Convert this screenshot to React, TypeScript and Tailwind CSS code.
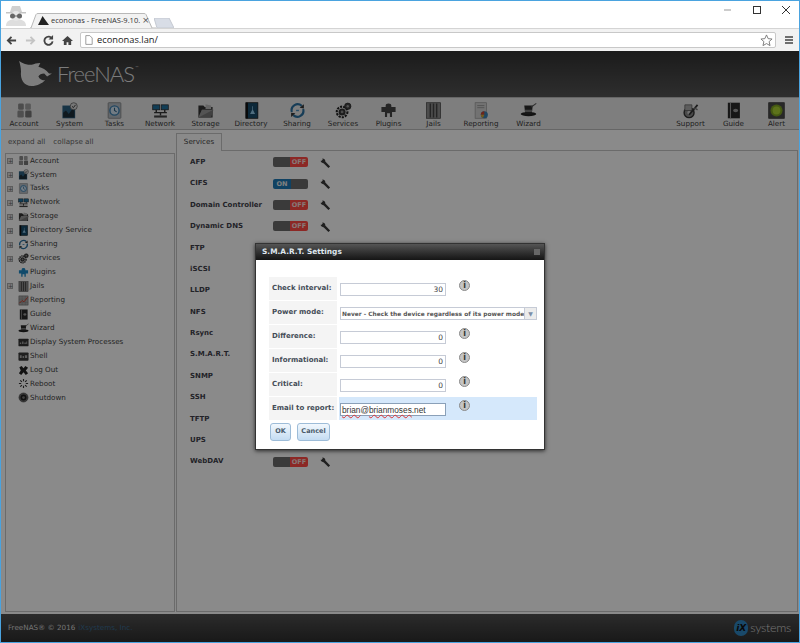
import { ReactNode } from "react";

const icons: Record<string, ReactNode> = {
  account: (
    <>
      <rect x="3" y="2" width="8" height="9" rx="2" fill="#8a8a8a" />
      <rect x="13" y="2" width="8" height="9" rx="2" fill="#a0a0a0" />
      <rect x="2" y="12" width="9" height="10" rx="2" fill="#909090" />
      <rect x="13" y="12" width="9" height="10" rx="2" fill="#777" />
    </>
  ),
  system: (
    <>
      <rect x="2" y="5" width="18" height="18" fill="#2b5f80" />
      <path d="M3 22v-7l4-3 4 5 5-7 3 2v10z" fill="#1c2e3a" />
      <circle cx="18" cy="6" r="5" fill="#d9d9d9" stroke="#555" />
      <path d="M15.5 6l2 2 3-4" stroke="#333" strokeWidth="1.3" fill="none" />
    </>
  ),
  tasks: (
    <>
      <rect x="3" y="1" width="18" height="22" rx="1" fill="#b4bcc4" stroke="#777" />
      <circle cx="12" cy="12" r="6.5" fill="#cfe0ee" stroke="#3a7fb0" strokeWidth="2" />
      <path d="M12 8v4l3 2" stroke="#2a5c80" strokeWidth="1.5" fill="none" />
    </>
  ),
  network: (
    <>
      <rect x="1" y="4" width="10" height="7" fill="#1f6f9c" stroke="#222" />
      <rect x="13" y="4" width="10" height="7" fill="#1f6f9c" stroke="#222" />
      <path d="M6 11v3M18 11v3M3 15h18M12 15v4" stroke="#333" strokeWidth="2" />
      <rect x="3" y="19" width="18" height="3" fill="#444" />
    </>
  ),
  storage: (
    <>
      <path d="M2 5h7l2 2h11v15H2z" fill="#333" />
      <path d="M12 3l8 2v5h-8z" fill="#bbb" />
      <path d="M2 22l5-11h16l-3 11z" fill="#777" />
      <path d="M2 22l5-11h16z" fill="#999" />
    </>
  ),
  directory: (
    <>
      <rect x="4" y="1" width="17" height="22" fill="#174a68" stroke="#111" />
      <rect x="4" y="1" width="3" height="22" fill="#111" />
      <path d="M13 6v5l-3 6h7l-3-6V6z" fill="#8fc6e8" />
    </>
  ),
  sharing: (
    <>
      <path d="M4 14A8.5 8.5 0 0 1 18 5.500" stroke="#2a6f9e" strokeWidth="3" fill="none" />
      <path d="M20 10A8.500 8.500 0 0 1 6 18.500" stroke="#2a6f9e" strokeWidth="3" fill="none" />
      <path d="M15 8l6-5v6zM9 16l-6 5v-6z" fill="#333" />
      <path d="M10 12h4" stroke="#4a90c0" strokeWidth="2" />
    </>
  ),
  services: (
    <>
      <circle cx="10" cy="14" r="7.500" fill="none" stroke="#222" strokeWidth="3" strokeDasharray="3 1.500" />
      <circle cx="10" cy="14" r="5" fill="#333" />
      <circle cx="10" cy="14" r="2" fill="#888" />
      <circle cx="18" cy="6" r="4.500" fill="#444" stroke="#222" />
      <circle cx="18" cy="6" r="1.700" fill="#999" />
    </>
  ),
  plugins: <path d="M8 5a4 3 0 0 1 8 0v2h6v7h-5v7h-3v-5h-4v5H7v-7H2V7h6z" fill="#444" />,
  pluginsBlue: <path d="M8 5a4 3 0 0 1 8 0v2h6v7h-5v7h-3v-5h-4v5H7v-7H2V7h6z" fill="#1e88c4" />,
  jails: (
    <>
      <rect x="2" y="1" width="20" height="22" fill="#8a8a8a" stroke="#444" />
      <path d="M7.500 2v20M12 2v20M16.500 2v20" stroke="#444" strokeWidth="2" />
    </>
  ),
  reporting: (
    <>
      <rect x="3" y="1" width="16" height="22" fill="#cfcfcf" stroke="#999" />
      <path d="M6 5h10M6 8h10" stroke="#888" />
      <circle cx="16" cy="18" r="5" fill="#3b82b5" />
      <path d="M16 18v-5a5 5 0 0 0-5 5z" fill="#c8442f" />
      <path d="M16 18h-5a5 5 0 0 0 3 4.600z" fill="#d8a52f" />
    </>
  ),
  reportingSmall: (
    <>
      <rect x="2" y="2" width="20" height="20" fill="#a8a8a8" stroke="#555" />
      <path d="M2 9h20M2 16h20M9 2v20M16 2v20" stroke="#777" strokeWidth="0.7" />
      <path d="M3 18l6-6 4 3 8-10" stroke="#c93a2a" strokeWidth="2" fill="none" />
    </>
  ),
  wizard: (
    <>
      <ellipse cx="12" cy="17" rx="11" ry="3" fill="#222" />
      <path d="M6 5h12l-1.500 12h-9z" fill="#2b2b2b" />
      <path d="M6.700 11h10.600l-.4 3H7.100z" fill="#777" />
      <path d="M16 7l7-5" stroke="#555" strokeWidth="1.500" />
    </>
  ),
  support: (
    <>
      <circle cx="10" cy="15" r="7" fill="#888" stroke="#333" strokeWidth="2" />
      <circle cx="10" cy="15" r="2.500" fill="#ccc" />
      <path d="M4 4h10v8H4z" fill="#aaa" stroke="#555" />
      <path d="M10 18L22 4" stroke="#333" strokeWidth="2.500" />
      <path d="M17 8l5 3" stroke="#777" strokeWidth="2" />
    </>
  ),
  guide: (
    <>
      <rect x="4" y="1" width="17" height="22" fill="#2a2a2a" />
      <rect x="7" y="1" width="1.500" height="22" fill="#999" />
      <ellipse cx="15" cy="12" rx="3.500" ry="2.500" fill="#9a9a9a" />
    </>
  ),
  alert: (
    <>
      <rect x="1" y="1" width="22" height="22" fill="#4a4a4a" stroke="#2f2f2f" />
      <circle cx="12" cy="12" r="8.500" fill="#7ea321" />
      <circle cx="12" cy="12" r="5.500" fill="#a9d132" />
    </>
  ),
  display: (
    <>
      <rect x="1" y="4" width="22" height="16" rx="1" fill="#333" />
      <path d="M4 12h3v3H4zM9 10h3v5H9zM14 12h3v3h-3zM18 10h2v5h-2z" fill="#a5a5a5" />
    </>
  ),
  shell: (
    <>
      <rect x="1" y="3" width="22" height="18" rx="2" fill="#3a3a3a" />
      <path d="M4 9h4v6H4zM10 11h3v4h-3zM15 9h5v6h-5z" fill="#aaa" />
    </>
  ),
  logout: <path d="M3 5l5-3 4 5 4-5 6 4-5 6 5 6-5 4-5-6-5 6-5-4 4-6z" fill="#222" />,
  reboot: (
    <path
      d="M12 2v5M12 17v5M2 12h5M17 12h5M5 5l3.500 3.500M15.500 15.500L19 19M19 5l-3.500 3.500M8.500 15.500L5 19"
      stroke="#333"
      strokeWidth="2.500"
    />
  ),
  shutdown: (
    <>
      <circle cx="12" cy="12" r="10" fill="#666" stroke="#333" />
      <circle cx="12" cy="12" r="6.500" fill="#1f1f1f" />
      <circle cx="12" cy="12" r="3" fill="#777" />
    </>
  ),
};

function Icon({ name, className }: { name: string; className: string }) {
  return (
    <svg viewBox="0 0 24 24" className={className}>
      {icons[name]}
    </svg>
  );
}

const navLeft = [
  { label: "Account", icon: "account", w: "w-[46px]" },
  { label: "System", icon: "system", w: "w-[45px]" },
  { label: "Tasks", icon: "tasks", w: "w-[45px]" },
  { label: "Network", icon: "network", w: "w-[46px]" },
  { label: "Storage", icon: "storage", w: "w-[45px]" },
  { label: "Directory", icon: "directory", w: "w-[46px]" },
  { label: "Sharing", icon: "sharing", w: "w-[46px]" },
  { label: "Services", icon: "services", w: "w-[46px]" },
  { label: "Plugins", icon: "plugins", w: "w-[45px]" },
  { label: "Jails", icon: "jails", w: "w-[45px]" },
  { label: "Reporting", icon: "reporting", w: "w-[50px]" },
  { label: "Wizard", icon: "wizard", w: "w-[45px]" },
];

const navRight = [
  { label: "Support", icon: "support", w: "w-[43px]" },
  { label: "Guide", icon: "guide", w: "w-[43px]" },
  { label: "Alert", icon: "alert", w: "w-[43px]" },
];

const tree = [
  { label: "Account", icon: "account", plus: true },
  { label: "System", icon: "system", plus: true },
  { label: "Tasks", icon: "tasks", plus: true },
  { label: "Network", icon: "network", plus: true },
  { label: "Storage", icon: "storage", plus: true },
  { label: "Directory Service", icon: "directory", plus: true },
  { label: "Sharing", icon: "sharing", plus: true },
  { label: "Services", icon: "services", plus: true },
  { label: "Plugins", icon: "pluginsBlue", plus: false },
  { label: "Jails", icon: "jails", plus: true },
  { label: "Reporting", icon: "reportingSmall", plus: false },
  { label: "Guide", icon: "guide", plus: false },
  { label: "Wizard", icon: "wizard", plus: false },
  { label: "Display System Processes", icon: "display", plus: false },
  { label: "Shell", icon: "shell", plus: false },
  { label: "Log Out", icon: "logout", plus: false },
  { label: "Reboot", icon: "reboot", plus: false },
  { label: "Shutdown", icon: "shutdown", plus: false },
];

const services = [
  { name: "AFP", on: false },
  { name: "CIFS", on: true },
  { name: "Domain Controller", on: false },
  { name: "Dynamic DNS", on: false },
  { name: "FTP", on: false },
  { name: "iSCSI", on: false },
  { name: "LLDP", on: false },
  { name: "NFS", on: false },
  { name: "Rsync", on: false },
  { name: "S.M.A.R.T.", on: false },
  { name: "SNMP", on: false },
  { name: "SSH", on: false },
  { name: "TFTP", on: false },
  { name: "UPS", on: false },
  { name: "WebDAV", on: false },
];

function Wrench() {
  return (
    <svg viewBox="0 0 12 12" className="w-[11px] h-[11px]">
      <path
        d="M1 3.500L3 1.500 2.500 .5A3 3 0 0 1 5.800 3.800L11 9.200 9.200 11 3.900 5.600A3 3 0 0 1 .6 2.300z"
        fill="#3a3a3a"
      />
    </svg>
  );
}

function Toggle({ on }: { on: boolean }) {
  return (
    <div className="flex w-[35px] h-[10px] rounded-[2px] overflow-hidden text-[6.500px] font-bold leading-[10px] text-center">
      {on ? (
        <>
          <span className="w-[18px] bg-[#1e78b4] text-[#e8e8e8]">ON</span>
          <span className="flex-1 bg-[#6a6a6a]" />
        </>
      ) : (
        <>
          <span className="flex-1 bg-[#6a6a6a]" />
          <span className="w-[18px] bg-[#ff4a44] text-[#f4dcdc]">OFF</span>
        </>
      )}
    </div>
  );
}

function InfoDot() {
  return (
    <div className="w-[11px] h-[11px] rounded-full bg-[#c4c4c4] border border-[#8a8a8a] flex items-center justify-center text-[8px] font-bold leading-none text-[#333]">
      i
    </div>
  );
}

function FormRow({
  label,
  children,
  active,
  info = true,
}: {
  label: string;
  children: ReactNode;
  active?: boolean;
  info?: boolean;
}) {
  return (
    <div className="flex h-[23px] gap-[2px]">
      <div className="w-[68px] bg-[#f4f4f4] pl-[3px] flex items-center text-[7px] font-bold text-[#444d58] whitespace-nowrap">
        {label}
      </div>
      <div className={`flex-1 flex pl-[1px] ${active ? "bg-[#d5e8fb]" : ""}`}>
        <div className="pt-[6px]">{children}</div>
        {info && (
          <div className="ml-[13px] pt-[3px]">
            <InfoDot />
          </div>
        )}
      </div>
    </div>
  );
}

function NumInput({ value }: { value: string }) {
  return (
    <div className="w-[106px] h-[13px] bg-white border border-[#c6cbd6] text-right pr-[2px] text-[7.500px] leading-[12px] text-[#444]">
      {value}
    </div>
  );
}

function NavItem({ item }: { item: { label: string; icon: string; w: string } }) {
  return (
    <div className={`${item.w} flex flex-col items-center shrink-0`}>
      <Icon name={item.icon} className="w-[17px] h-[17px] mt-[4px]" />
      <span className="text-[7.200px] leading-[10px] text-[#3b3b3b]">{item.label}</span>
    </div>
  );
}

export default function App() {
  return (
    <div className="w-[800px] h-[643px] overflow-hidden flex flex-col bg-white border border-[#4aa3df] font-['DejaVu_Sans',sans-serif]">
      {/* browser chrome */}
      <div className="h-[27px] flex items-end relative shrink-0">
        <svg viewBox="0 0 24 24" className="w-[24px] h-[24px] ml-[3px] mb-[1px]">
          <path d="M2 23c0-5 4-7 10-7s10 2 10 7z" fill="#dedede" />
          <path d="M6 9l2-6h8l2 6z" fill="#d0d0d0" />
          <path d="M2 9h20v1.500H2z" fill="#c4c4c4" />
          <circle cx="12" cy="13" r="5" fill="#e6e6e6" />
          <circle cx="8.500" cy="13" r="2.500" fill="#666" />
          <circle cx="15.500" cy="13" r="2.500" fill="#666" />
          <path d="M8 13h8" stroke="#666" />
        </svg>
        <div className="relative ml-[2px] w-[126px] h-[15px] flex items-center pl-[8px]">
          <svg viewBox="0 0 126 15" className="absolute inset-0 w-full h-full" preserveAspectRatio="none">
            <path d="M0 15h1L6 1.500Q6.500.5 8 .5h106q1.500 0 2 1L122 15h4" fill="#f2f2f2" stroke="#b8b8b8" />
          </svg>
          <svg viewBox="0 0 12 12" className="relative w-[11px] h-[11px]">
            <path d="M0 11L5 1l2 3 5 7z" fill="#222" />
          </svg>
          <span className="relative text-[7.500px] ml-[2px] text-[#333] font-['Open_Sans',sans-serif] whitespace-nowrap w-[88px]">
            econonas - FreeNAS-9.10.
          </span>
          <span className="relative text-[9px] ml-[3px] text-[#555]">×</span>
        </div>
        <svg viewBox="0 0 20 10" className="w-[20px] h-[10px] -ml-[2px]">
          <path d="M0 0h15l5 10H3z" fill="#d8dde6" stroke="#c4c8d0" />
        </svg>
        <div className="ml-auto self-start flex items-center mt-[4px] mr-[8px] gap-[19px]">
          <svg viewBox="0 0 10 10" className="w-[10px] h-[10px]">
            <path d="M1 5h7" stroke="#999" />
          </svg>
          <svg viewBox="0 0 10 10" className="w-[10px] h-[10px]">
            <rect x="1.500" y="1.500" width="7" height="7" fill="none" stroke="#333" />
          </svg>
          <svg viewBox="0 0 10 10" className="w-[10px] h-[10px]">
            <path d="M1 1l8 8M9 1l-8 8" stroke="#333" />
          </svg>
        </div>
      </div>
      <div className="h-[23px] shrink-0 bg-[#f2f2f2] border-t border-[#d4d4d4] flex items-center pl-[5px] gap-[7.500px] relative">
        <svg viewBox="0 0 12 12" className="w-[11px] h-[11px]">
          <path d="M11 6H3M6 2L2 6l4 4" stroke="#444" strokeWidth="2" fill="none" />
        </svg>
        <svg viewBox="0 0 12 12" className="w-[11px] h-[11px]">
          <path d="M1 6h8M6 2l4 4-4 4" stroke="#c4c4c4" strokeWidth="2" fill="none" />
        </svg>
        <svg viewBox="0 0 12 12" className="w-[11px] h-[11px]">
          <path d="M10 4A4.500 4.500 0 1 0 10.500 7" stroke="#444" strokeWidth="2" fill="none" />
          <path d="M11 0v5H6z" fill="#444" />
        </svg>
        <svg viewBox="0 0 12 12" className="w-[11px] h-[11px]">
          <path d="M6 1L0 6.500h2V11h3V8h2v3h3V6.500h2z" fill="#444" />
        </svg>
        <div className="flex-1 h-[16px] mr-[23px] bg-white border border-[#c8c8c8] rounded-[2px] flex items-center pl-[4px] relative">
          <svg viewBox="0 0 10 12" className="w-[8px] h-[10px]">
            <path d="M1 .5h5l3 3v8H1z" fill="#fff" stroke="#888" />
          </svg>
          <span className="ml-[4px] text-[9.300px] text-[#222] font-['Open_Sans',sans-serif]">
            econonas.lan/
          </span>
          <svg viewBox="0 0 14 14" className="absolute right-[2px] top-[1px] w-[13px] h-[13px]">
            <path d="M7 1l1.800 4 4.200.4-3.200 2.800 1 4.300L7 10.300 3.200 12.500l1-4.300L1 5.400l4.200-.4z" fill="none" stroke="#777" />
          </svg>
        </div>
        <svg viewBox="0 0 10 10" className="absolute right-[5px] top-[6px] w-[10px] h-[10px]">
          <path d="M1 2h8M1 5h8M1 8h8" stroke="#444" strokeWidth="1.500" />
        </svg>
      </div>

      {/* freenas app */}
      <div className="flex-1 relative flex flex-col min-h-0">
        <div className="h-[46px] shrink-0 bg-gradient-to-b from-[#323232] to-[#555555] flex items-center pl-[17px]">
          <svg viewBox="0 0 36 30" className="w-[35px] h-[29px]">
            <path
              d="M1 1c4 3 8 4 13 4 3-1 5-2 9-2l-2 4c4 1 8 3 11 7l3 0-5 3-3-3c-3 0-5 1-6 3 1 3 4 4 7 4-3 3-8 6-14 6C6 27 2 20 3 12 3 8 2 4 1 1z"
              fill="#e4e4e4"
            />
          </svg>
          <span className="ml-[4px] text-[22px] leading-none font-light tracking-[-1px] text-[#e2e2e2] font-['Lato',sans-serif]">
            FreeNAS
          </span>
          <span className="text-[4px] self-start mt-[14px] ml-[1px] text-[#ccc]">™</span>
        </div>
        <div className="h-[33px] shrink-0 bg-[#e6e6e6] border-t border-[#bbb] border-b flex">
          {navLeft.map((n) => (
            <NavItem key={n.label} item={n} />
          ))}
          <div className="flex ml-auto mr-[1px]">
            {navRight.map((n) => (
              <NavItem key={n.label} item={n} />
            ))}
          </div>
        </div>
        <div className="flex-1 flex min-h-0 bg-[#fcfcfc]">
          {/* sidebar */}
          <div className="w-[174px] shrink-0 flex flex-col pl-[4px] pb-[2px]">
            <div className="h-[23px] shrink-0 pl-[3px] pt-[7px] text-[7.200px] leading-[10px] text-[#666] flex gap-[8px]">
              <span>expand all</span>
              <span>collapse all</span>
            </div>
            <div className="flex-1 border border-[#c4c4c4]">
              {tree.map((t) => (
                <div key={t.label} className="h-[13.950px] flex items-center text-[7.200px] text-[#3f3f3f]">
                  <div className="w-[12px] flex shrink-0 pl-[1px]">
                    {t.plus && (
                      <span className="w-[6px] h-[6px] border border-[#aaa] bg-[#ddd] text-[6px] leading-[4px] text-center text-[#666]">
                        +
                      </span>
                    )}
                  </div>
                  <Icon name={t.icon} className="w-[11px] h-[11px] shrink-0" />
                  <span className="ml-[1px] whitespace-nowrap">{t.label}</span>
                </div>
              ))}
            </div>
          </div>
          {/* services */}
          <div className="flex-1 flex flex-col pl-[1px] pr-[1px] pb-[2px] pt-[2px]">
            <div className="h-[18px] w-[46px] shrink-0 bg-[#fcfcfc] border border-b-0 border-[#c4c4c4] text-[7.200px] text-[#444] flex items-center justify-center relative top-[1px]">
              Services
            </div>
            <div className="flex-1 border border-[#c4c4c4] pl-[13px] pt-[0.500px]">
              {services.map((s) => (
                <div key={s.name} className="h-[21.400px] flex items-center">
                  <span className="w-[83px] text-[7px] font-bold text-[#3f3f4a] whitespace-nowrap">{s.name}</span>
                  <Toggle on={s.on} />
                  <div className="ml-[12px] pt-[2px]">
                    <Wrench />
                  </div>
                </div>
              ))}
            </div>
          </div>
        </div>
        <div className="h-[28px] shrink-0 bg-gradient-to-b from-[#505050] to-[#2e2e2e] flex items-center pl-[7px] pr-[8px] text-[7.200px]">
          <span className="text-[#d4d4d4]">FreeNAS® © 2016</span>
          <span className="ml-[3px] text-[#3a6a90]">iXsystems, Inc.</span>
          <div className="ml-auto flex items-center">
            <div className="w-[14px] h-[16px] rounded-full bg-[#2e86c1] flex items-center justify-center text-[#111] text-[9px] font-bold italic leading-none">
              iX
            </div>
            <span className="ml-[2px] text-[12.500px] leading-none font-light tracking-[-0.3px] text-[#d8d8d8] font-['Lato',sans-serif]">
              systems
            </span>
          </div>
        </div>

        {/* dim layer and dialog */}
        <div className="absolute inset-0 bg-black/45" />
        <div className="absolute left-[254px] top-[192px] w-[290px] h-[207px] bg-white shadow-[0_1px_4px_rgba(0,0,0,0.7)] border border-[#333] flex flex-col">
          <div className="h-[16px] shrink-0 bg-gradient-to-b from-[#555] to-[#151515] flex items-center justify-between pl-[6px] pr-[4px]">
            <span className="text-[7.400px] font-bold text-[#dfe6ee]">S.M.A.R.T. Settings</span>
            <span className="w-[6px] h-[6px] bg-[#666]" />
          </div>
          <div className="pl-[13px] pr-[7px] pt-[17px] flex flex-col gap-[1px]">
            <FormRow label="Check interval:">
              <NumInput value="30" />
            </FormRow>
            <FormRow label="Power mode:" info={false}>
              <div className="w-[197px] h-[13px] flex bg-white border border-[#c6cbd6] text-[5.900px] leading-[12px] font-bold text-[#555] whitespace-nowrap">
                <span className="flex-1 pl-[1px]">Never - Check the device regardless of its power mode</span>
                <span className="w-[13px] bg-[#ececec] border-l border-[#c6cbd6] text-center text-[6px] text-[#7b8fa8]">▼</span>
              </div>
            </FormRow>
            <FormRow label="Difference:">
              <NumInput value="0" />
            </FormRow>
            <FormRow label="Informational:">
              <NumInput value="0" />
            </FormRow>
            <FormRow label="Critical:">
              <NumInput value="0" />
            </FormRow>
            <FormRow label="Email to report:" active>
              <div className="w-[106px] h-[13px] bg-white border border-[#8aa0b8] pl-[1px] text-[8.300px] leading-[12px] text-[#333] whitespace-nowrap font-['Liberation_Sans',sans-serif]">
                <span className="underline decoration-wavy decoration-[#d33] decoration-1">brian</span>@
                <span className="underline decoration-wavy decoration-[#d33] decoration-1">brianmoses</span>.net
              </div>
            </FormRow>
          </div>
          <div className="flex gap-[6px] pl-[14px] pt-[3px]">
            <button className="w-[21px] h-[18px] rounded-[3px] border border-[#9dbcd8] bg-gradient-to-b from-[#f2f8fd] to-[#c4dcf2] text-[6.500px] font-bold text-[#4a5a6a]">
              OK
            </button>
            <button className="w-[33px] h-[18px] rounded-[3px] border border-[#9dbcd8] bg-gradient-to-b from-[#f2f8fd] to-[#c4dcf2] text-[6.500px] font-bold text-[#4a5a6a]">
              Cancel
            </button>
          </div>
        </div>
      </div>
    </div>
  );
}
